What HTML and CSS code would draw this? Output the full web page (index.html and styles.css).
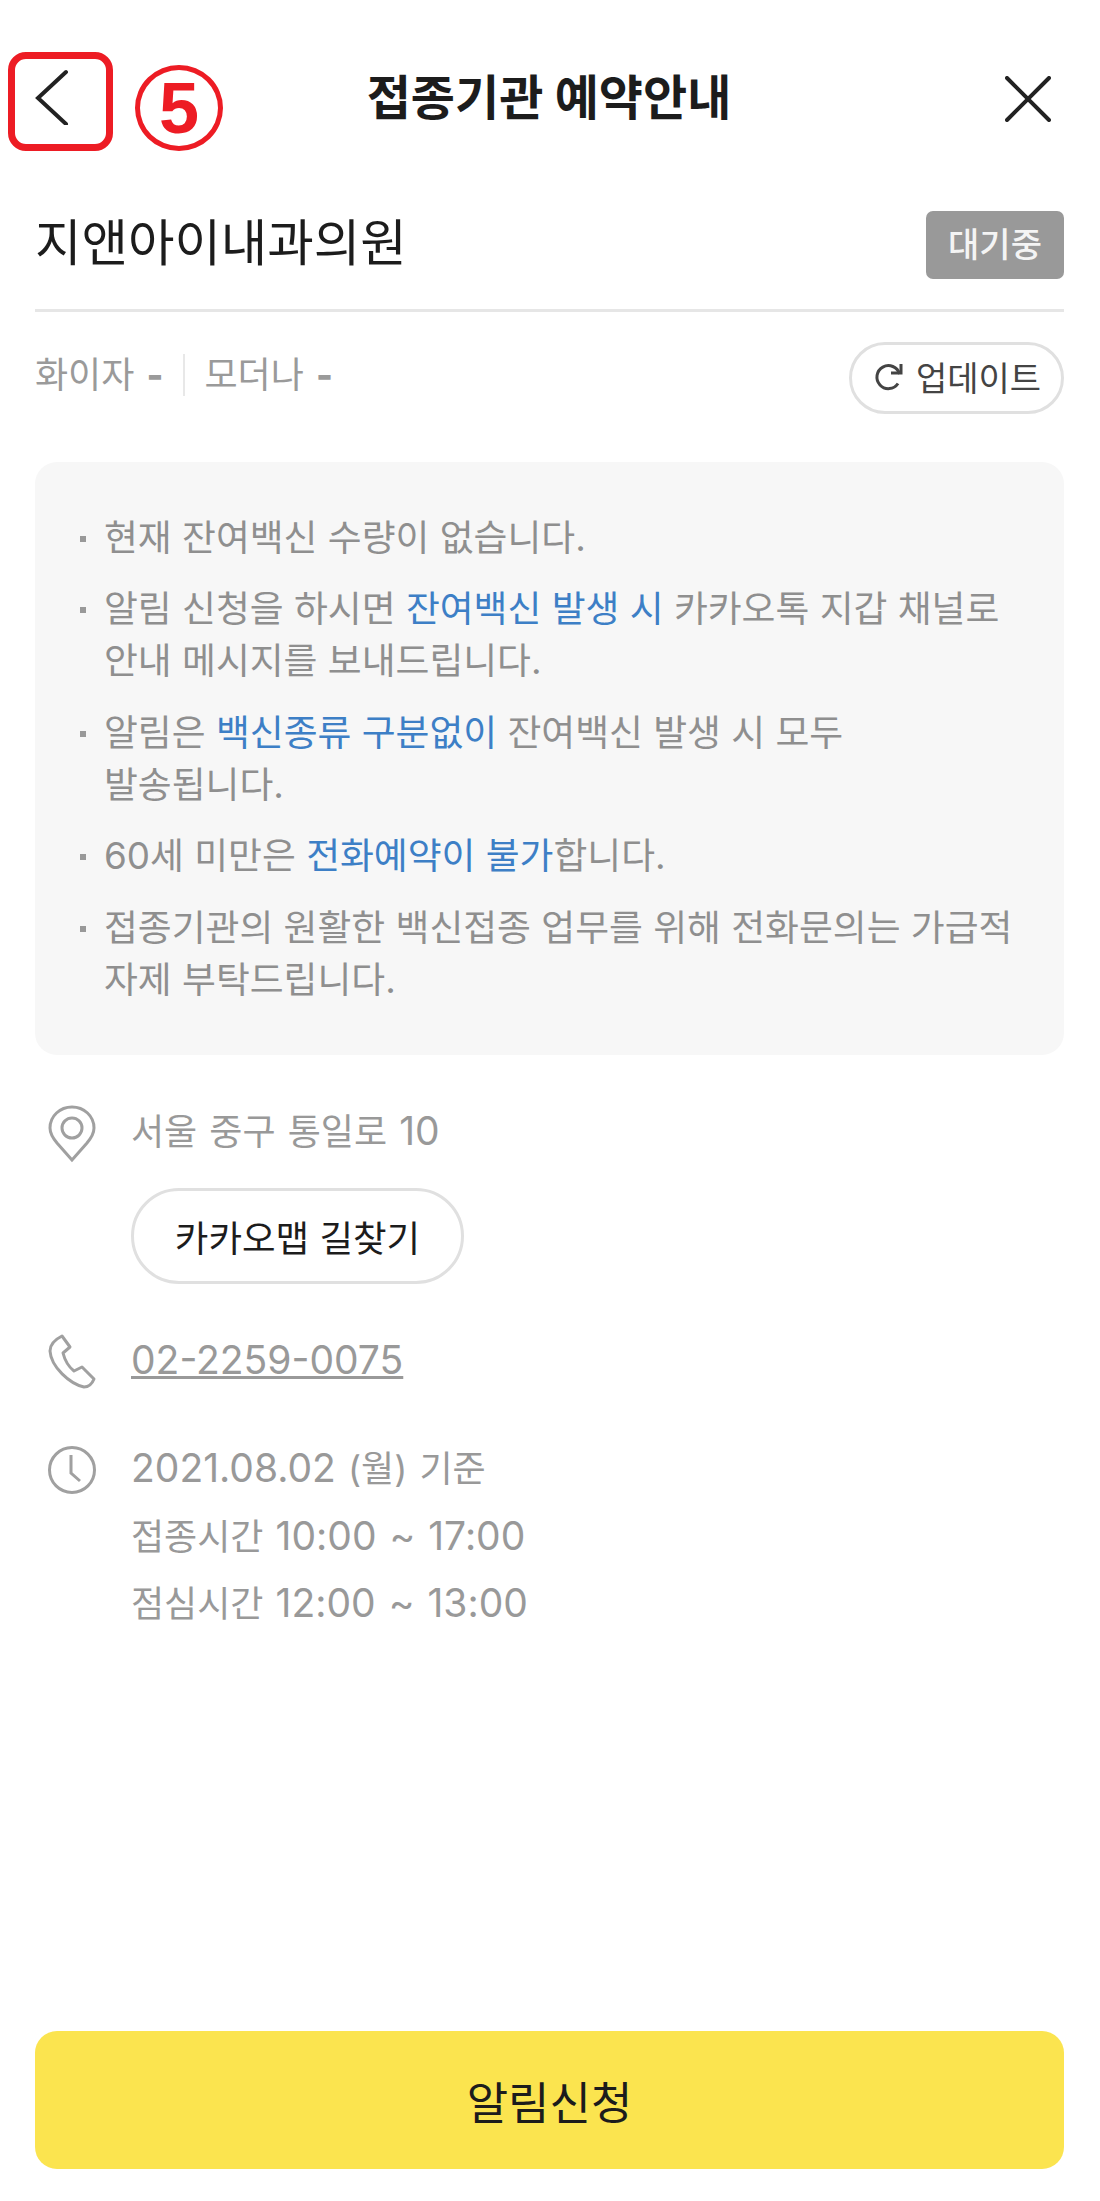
FILE: index.html
```html
<html lang="ko"><head>
    <meta charset="UTF-8">
    <meta name="viewport" content="width=device-width, initial-scale=1.0">
    <title>접종기관 예약안내</title>
    <link rel="stylesheet" href="styles.css">
</head>
<body>
    <div id="page">
        <div id="topBar">
            <a class="iconBtn" id="backBtn" href="#">
                <svg width="36" height="56" viewBox="0 0 36 56"><path d="M31 3 L3 29 L31 55" fill="none" stroke="#222" stroke-width="4" stroke-linecap="round"/></svg>
            </a>
            <h1 id="title">접종기관 예약안내</h1>
            <a class="iconBtn" id="closeBtn" href="#">
                <svg width="46" height="46" viewBox="0 0 46 46"><path d="M2 2 L44 44 M44 2 L2 44" fill="none" stroke="#222" stroke-width="4" stroke-linecap="round"/></svg>
            </a>
        </div>

        <!-- red marks from the guide document -->
        <div id="markBox"></div>
        <div id="markNum">5</div>

        <div id="nameRow">
            <h2 id="orgName">지앤아이내과의원</h2>
            <span id="statusBadge">대기중</span>
        </div>

        <div id="stockRow">
            <div id="stockText">
                <span class="stockItem">화이자 <b>-</b></span>
                <span class="stockItem">모더나 <b>-</b></span>
            </div>
            <button id="updateBtn">
                <svg width="30" height="30" viewBox="0 0 30 30"><path d="M25.5 13 A11.5 11.5 0 1 0 24 22.5" fill="none" stroke="#444" stroke-width="3"/><path d="M17 12 L27 12 L27 3" fill="none" stroke="#444" stroke-width="3"/></svg>
                업데이트
            </button>
        </div>

        <ul id="noticeBox">
            <li>현재 잔여백신 수량이 없습니다.</li>
            <li>알림 신청을 하시면 <em>잔여백신 발생 시</em> 카카오톡 지갑 채널로<br>안내 메시지를 보내드립니다.</li>
            <li>알림은 <em>백신종류 구분없이</em> 잔여백신 발생 시 모두<br>발송됩니다.</li>
            <li>60세 미만은 <em>전화예약이 불가</em>합니다.</li>
            <li>접종기관의 원활한 백신접종 업무를 위해 전화문의는 가급적<br>자제 부탁드립니다.</li>
        </ul>

        <div class="infoRow" id="addressRow">
            <svg class="infoIcon" width="48" height="58" viewBox="0 0 48 58"><path d="M24 55 L9 38 C4 32 2 28 2 23 C2 11 12 2 24 2 C36 2 46 11 46 23 C46 28 44 32 39 38 Z" fill="none" stroke="#a0a0a0" stroke-width="3"/><circle cx="24" cy="23" r="10" fill="none" stroke="#a0a0a0" stroke-width="3"/></svg>
            <div>
                <div class="infoText">서울 중구 통일로 <span class="num">10</span></div>
                <button id="mapBtn">카카오맵 길찾기</button>
            </div>
        </div>

        <div class="infoRow" id="phoneRow">
            <svg class="infoIcon" width="48" height="56" viewBox="0 0 48 56"><path d="M14 2 L22 13 L15 19 C17 27 21 33 26 37 L34 33 L46 45 C44 50 40 53 36 53 C22 50 3 33 2 17 C2 11 6 6 14 2 Z" fill="none" stroke="#a0a0a0" stroke-width="3" stroke-linejoin="round"/></svg>
            <a class="infoText" id="phoneLink" href="#"><span class="num">02-2259-0075</span></a>
        </div>

        <div class="infoRow" id="timeRow">
            <svg class="infoIcon" width="48" height="48" viewBox="0 0 48 48"><circle cx="24" cy="24" r="22.5" fill="none" stroke="#a0a0a0" stroke-width="3"/><path d="M23 9 V27 L32 35" fill="none" stroke="#a0a0a0" stroke-width="3"/></svg>
            <div class="infoText" id="timeText">
                <span class="num">2021.08.02</span> (월) 기준<br>
                접종시간 <span class="num">10:00 ~ 17:00</span><br>
                점심시간 <span class="num">12:00 ~ 13:00</span>
            </div>
        </div>

        <button id="applyBtn">알림신청</button>
    </div>
</body>
</html>
```

FILE: styles.css
```css
* {
    box-sizing: border-box;
}

body {
    margin: 0;
    padding: 0;
    background-color: #fff;
    font-family: 'Inter', 'Noto Sans CJK KR', sans-serif;
    color: #1c1c1c;
}

button {
    font-family: inherit;
    background-color: #fff;
    cursor: pointer;
}

#page {
    position: relative;
    display: flex;
    flex-direction: column;
    height: 2201px;
    padding: 0 36px 32px 35px;
}

#topBar {
    display: flex;
    align-items: center;
    justify-content: space-between;
    height: 190px;
    padding-top: 6px;
    padding-right: 13px;
}

.iconBtn {
    display: flex;
}

#backBtn {
    margin-bottom: 2px;
}

#closeBtn {
    margin-top: 2px;
}

#title {
    margin: 0 0 0 22px;
    font-size: 48px;
    line-height: 60px;
    font-weight: 700;
}

/* annotation marks lie over the header */
#markBox {
    position: absolute;
    left: 8px;
    top: 52px;
    width: 105px;
    height: 99px;
    border: 7px solid #ed1c24;
    border-radius: 18px;
}

#markNum {
    position: absolute;
    left: 135px;
    top: 65px;
    width: 88px;
    height: 86px;
    border: 5px solid #ed1c24;
    border-radius: 50%;
    color: #ed1c24;
    font-family: 'Liberation Sans', sans-serif;
    font-size: 72px;
    font-weight: 700;
    line-height: 76px;
    text-align: center;
}

#nameRow {
    display: flex;
    align-items: center;
    justify-content: space-between;
    height: 122px;
    padding-bottom: 10px;
    border-bottom: 3px solid #e6e6e6;
}

#orgName {
    margin: 0 0 4px;
    font-size: 50.5px;
    line-height: 60px;
    font-weight: 400;
}

#statusBadge {
    width: 138px;
    height: 68px;
    border-radius: 7px;
    background-color: #999;
    color: #f4f4f4;
    font-size: 34px;
    font-weight: 500;
    line-height: 67px;
    text-align: center;
}

#stockRow {
    display: flex;
    align-items: center;
    justify-content: space-between;
    margin-top: 30px;
}

#stockText {
    display: flex;
    align-items: center;
    margin-bottom: 6px;
    color: #9a9a9a;
    font-size: 36px;
    line-height: 42px;
}

.stockItem b {
    margin-left: 2px;
    font-weight: 800;
}

.stockItem + .stockItem {
    margin-left: 20px;
    padding-left: 19px;
    border-left: 2px solid #e8e8e8;
}

#updateBtn {
    display: flex;
    align-items: center;
    gap: 12px;
    height: 72px;
    width: 215px;
    padding: 0 0 4px 22px;
    border: 3px solid #e0e0e0;
    border-radius: 36px;
    color: #444;
    font-size: 34px;
}

#noticeBox {
    margin: 48px 0 0;
    padding: 30px 46px 31px 45px;
    list-style: none;
    height: 593px;
    border-radius: 22px;
    background-color: #f7f7f7;
    color: #8f8f8f;
    font-size: 36.8px;
    line-height: 52px;
}

#noticeBox li {
    position: relative;
    padding-left: 24px;
    margin-top: 19.5px;
}

#noticeBox li:before {
    content: "";
    position: absolute;
    left: 0;
    top: 24px;
    width: 6px;
    height: 6px;
    background-color: #999;
}

#noticeBox em {
    font-style: normal;
    color: #3d7fc6;
}

.infoRow {
    display: flex;
    align-items: flex-start;
}

.infoIcon {
    flex: none;
    width: 48px;
    margin: 0 35px 0 13px;
}

.infoText {
    color: #999;
    font-size: 36px;
    line-height: 52px;
    word-spacing: 2px;
}

.num {
    font-size: 39px;
}

#addressRow {
    margin-top: 50px;
}

#mapBtn {
    display: block;
    width: 333px;
    height: 96px;
    margin-top: 30px;
    border: 3px solid #e0e0e0;
    border-radius: 48px;
    color: #1c1c1c;
    font-size: 36.5px;
}

#phoneRow {
    margin-top: 50px;
}

#phoneLink {
    text-decoration: underline;
}

#timeRow {
    margin-top: 45px;
}

#timeText {
    line-height: 65.5px;
}

#timeRow .infoIcon {
    margin-top: 11px;
}

#applyBtn {
    margin-top: auto;
    height: 138px;
    border: none;
    border-radius: 22px;
    background-color: #fbe44f;
    color: #1c1c1c;
    font-size: 45px;
}
```
